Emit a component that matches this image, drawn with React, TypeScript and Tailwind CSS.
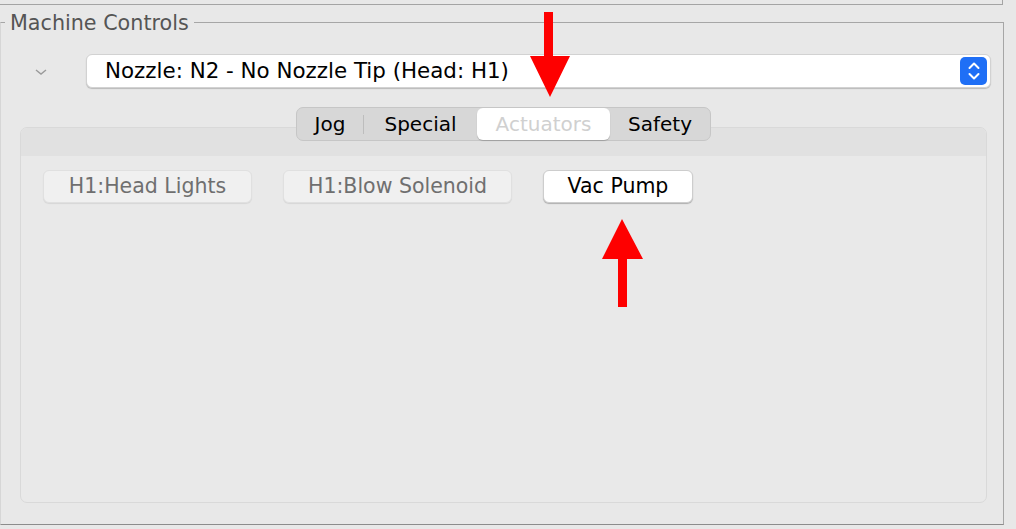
import React from "react";

const tabs = [
  { label: "Jog", w: "w-[66px]" },
  { label: "Special", w: "w-[113px]" },
  { label: "Actuators", w: "w-[133px]", active: true },
  { label: "Safety", w: "w-[100px]" },
];

function ActuatorButton({ label, enabled, w }: { label: string; enabled?: boolean; w: string }) {
  return (
    <button
      className={`${w} h-[33px] rounded-[6px] text-[20.5px] leading-none ${
        enabled
          ? "border border-[#cdcdcd] bg-white text-black shadow-[0_1px_1px_rgba(0,0,0,0.25)]"
          : "border border-[#e0e0e0] bg-[#f0f0f0] text-[#6f6f6f] shadow-[0_1px_1px_rgba(0,0,0,0.08)]"
      }`}
    >
      {label}
    </button>
  );
}

export default function App() {
  return (
    <div
      className="relative h-[529px] w-[1016px] overflow-hidden bg-[#e8e8e8] text-black"
      style={{ fontFamily: '"DejaVu Sans", "Liberation Sans", sans-serif' }}
    >
      {/* bottom edge of the panel above */}
      <div className="h-[5px] w-[1003px] border-b border-r border-[#a4a4a4]" />

      <fieldset className="mt-[5px] h-[515px] w-[1004px] border border-[#a6a6a6] border-b-[#8c8c8c] border-l-[#d6d6d6] p-0">
        <legend className="ml-[4px] px-[5px] pt-[2px] text-[20.7px] leading-[22px] text-[#555]">
          Machine Controls
        </legend>

        {/* nozzle selector */}
        <div className="flex items-center pl-[32px] pt-[20px]">
          <svg width="16" height="10" viewBox="0 0 16 10" className="mt-[2px]">
            <path d="M3 3l5 4 5-4" fill="none" stroke="#9a9a9a" strokeWidth="1.4" />
          </svg>
          <div className="ml-[37px] flex h-[34px] w-[905px] items-center rounded-[6px] border border-[#d2d2d2] bg-white pl-[18px] pr-[3px] shadow-[0_1px_1px_rgba(0,0,0,0.2)]">
            <span className="flex-1 text-[21.4px] leading-none">Nozzle: N2 - No Nozzle Tip (Head: H1)</span>
            <div className="flex h-[28px] w-[27px] items-center justify-center rounded-[5px] bg-[#1f6ff6]">
              <svg width="16" height="22" viewBox="0 0 16 22">
                <path d="M3.5 8l4.5-4.5 4.5 4.5M3.5 14l4.5 4.5 4.5-4.5" fill="none" stroke="#fff" strokeWidth="2" strokeLinecap="round" strokeLinejoin="round" />
              </svg>
            </div>
          </div>
        </div>

        {/* tabs */}
        <div className="mt-[19px] ml-[19px] w-[967px]">
          <div className="relative z-10 flex justify-center">
            <div className="flex h-[34px] items-center rounded-[7px] border border-[#c6c6c6] bg-[#d7d7d7] text-[20px] leading-none">
              {tabs.map((t, i) => (
                <div key={t.label} className="flex h-full items-center">
                  {i === 1 && <div className="h-[19px] w-px bg-[#bdbdbd]" />}
                  <div
                    className={`flex ${t.w} h-[32px] items-center justify-center ${
                      t.active
                        ? "rounded-[6px] bg-white text-[#d0d0d0] shadow-[0_1px_1px_rgba(0,0,0,0.2)]"
                        : ""
                    }`}
                  >
                    {t.label}
                  </div>
                </div>
              ))}
            </div>
          </div>

          <div className="-mt-[14px] h-[376px] overflow-hidden rounded-[7px] border border-[#d9d9d9] bg-[#e9e9e9]">
            <div className="h-[28px] bg-[#e1e1e1]" />
            <div className="flex gap-[31px] pl-[22px] pt-[14px]">
              <ActuatorButton label="H1:Head Lights" w="w-[209px]" />
              <ActuatorButton label="H1:Blow Solenoid" w="w-[229px]" />
              <ActuatorButton label="Vac Pump" w="w-[150px]" enabled />
            </div>
          </div>
        </div>
      </fieldset>

      {/* annotation arrows */}
      <svg className="pointer-events-none absolute left-0 top-0" width="1016" height="529">
        <path d="M544 12h9v44h17l-20 41-20-41h14z" fill="#fe0000" />
        <path d="M618 307v-48h-16l20-40 21 40h-16v48z" fill="#fe0000" />
      </svg>
    </div>
  );
}
